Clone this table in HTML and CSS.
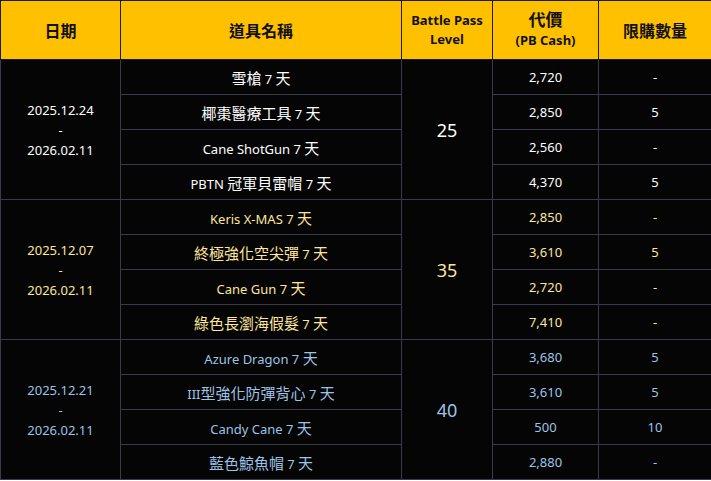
FILE: index.html
```html
<!DOCTYPE html>
<html lang="zh-Hant">
<head>
<meta charset="utf-8">
<link rel="stylesheet" href="styles.css">
</head>
<body>
<table class="bp">
  <colgroup>
    <col class="c-date"><col class="c-item"><col class="c-level"><col class="c-price"><col class="c-limit">
  </colgroup>
  <thead>
    <tr>
      <th class="h-big">日期</th>
      <th class="h-big">道具名稱</th>
      <th class="h-small">Battle Pass<br>Level</th>
      <th class="h-price"><span class="h-cjk">代價</span><br>(PB Cash)</th>
      <th class="h-big">限購數量</th>
    </tr>
  </thead>
  <tbody class="g-white">
    <tr><td class="date" rowspan="4">2025.12.24<br>-<br>2026.02.11</td><td><span class="cjk">雪槍</span> 7 <span class="cjk">天</span></td><td class="level" rowspan="4">25</td><td>2,720</td><td>-</td></tr>
    <tr><td><span class="cjk">椰棗醫療工具</span> 7 <span class="cjk">天</span></td><td>2,850</td><td>5</td></tr>
    <tr><td>Cane ShotGun 7 <span class="cjk">天</span></td><td>2,560</td><td>-</td></tr>
    <tr><td>PBTN <span class="cjk">冠軍貝雷帽</span> 7 <span class="cjk">天</span></td><td>4,370</td><td>5</td></tr>
  </tbody>
  <tbody class="g-yellow">
    <tr><td class="date" rowspan="4">2025.12.07<br>-<br>2026.02.11</td><td>Keris X-MAS 7 <span class="cjk">天</span></td><td class="level" rowspan="4">35</td><td>2,850</td><td>-</td></tr>
    <tr><td><span class="cjk">終極強化空尖彈</span> 7 <span class="cjk">天</span></td><td>3,610</td><td>5</td></tr>
    <tr><td>Cane Gun 7 <span class="cjk">天</span></td><td>2,720</td><td>-</td></tr>
    <tr><td><span class="cjk">綠色長瀏海假髮</span> 7 <span class="cjk">天</span></td><td>7,410</td><td>-</td></tr>
  </tbody>
  <tbody class="g-blue">
    <tr><td class="date" rowspan="4">2025.12.21<br>-<br>2026.02.11</td><td>Azure Dragon 7 <span class="cjk">天</span></td><td class="level" rowspan="4">40</td><td>3,680</td><td>5</td></tr>
    <tr><td>III<span class="cjk">型強化防彈背心</span> 7 <span class="cjk">天</span></td><td>3,610</td><td>5</td></tr>
    <tr><td>Candy Cane 7 <span class="cjk">天</span></td><td>500</td><td>10</td></tr>
    <tr><td><span class="cjk">藍色鯨魚帽</span> 7 <span class="cjk">天</span></td><td>2,880</td><td>-</td></tr>
  </tbody>
</table>
</body>
</html>
```
FILE: styles.css
```css
html, body {
  margin: 0;
  padding: 0;
  background: #ffffff;
}
body {
  font-family: "Noto Sans", "Noto Sans CJK TC", sans-serif;
}
.bp {
  border-collapse: collapse;
  table-layout: fixed;
  width: 711px;
  background: #050505;
}
.c-date { width: 120px; }
.c-item { width: 281px; }
.c-level { width: 91px; }
.c-price { width: 106px; }
.c-limit { width: 113px; }

.bp th {
  background: #ffc000;
  color: #111;
  height: 58px;
  padding: 0;
  border: 1px solid #1a1a1a;
  font-weight: 700;
  vertical-align: middle;
  text-align: center;
}
.h-big {
  font-size: 16px;
}
.h-small {
  font-size: 13px;
  line-height: 19px;
}
.h-price {
  font-size: 13px;
  line-height: 19px;
}
.h-cjk {
  font-size: 17px;
  font-weight: 700;
}
.bp td {
  height: 34px;
  padding: 0;
  border: 1px solid #3a3b48;
  text-align: center;
  vertical-align: middle;
  font-size: 13px;
}
.cjk {
  font-size: 15px;
}
.bp td.date {
  line-height: 20px;
}
.bp td.level {
  font-size: 18px;
}
.g-white td { color: #ffffff; }
.g-yellow td { color: #ffe699; }
.g-blue td { color: #9dc3e6; }
```
